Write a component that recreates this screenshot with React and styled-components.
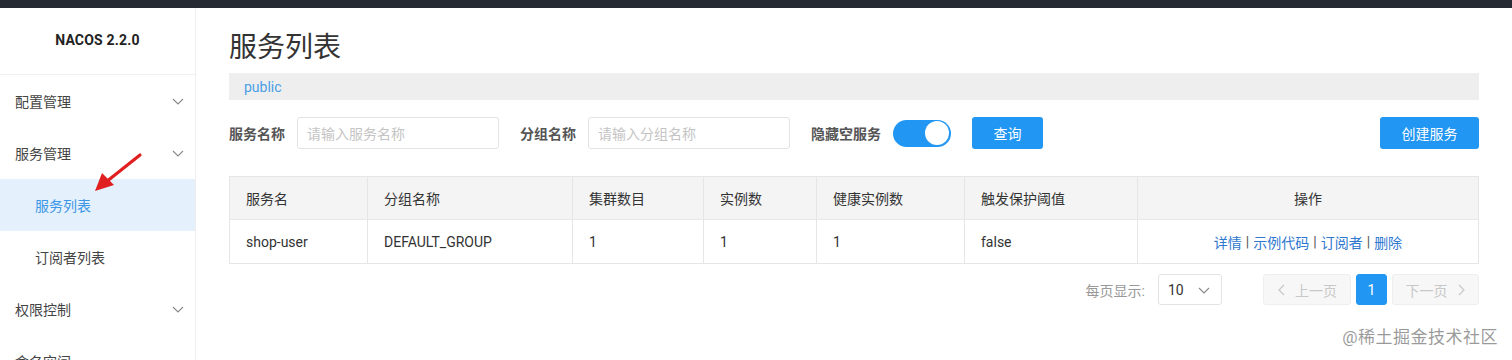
import React from "react";
import styled, { createGlobalStyle } from "styled-components";

const Global = createGlobalStyle`
  html, body { margin: 0; padding: 0; background: #fff; }
  body { font-family: Roboto, "Noto Sans CJK SC", sans-serif; color: #333; overflow: hidden; }
  * { box-sizing: border-box; }
`;

const Page = styled.div`
  position: relative;
  width: 1512px;
  height: 360px;
  overflow: hidden;
`;

const TopBar = styled.div`
  height: 8px;
  background: #262a33;
`;

const Body = styled.div`
  display: flex;
  height: 352px;
`;

const Sidebar = styled.aside`
  width: 196px;
  flex: none;
  border-right: 1px solid #eeeeee;
  display: flex;
  flex-direction: column;
  overflow: hidden;
`;

const Logo = styled.div`
  height: 67px;
  flex: none;
  border-bottom: 1px solid #f0f0f0;
  display: flex;
  align-items: center;
  justify-content: center;
  padding-bottom: 2px;
  font-weight: 700;
  font-size: 14px;
  color: #222;
  letter-spacing: 0.2px;
`;

const MenuItem = styled.div`
  height: 52px;
  flex: none;
  display: flex;
  align-items: center;
  justify-content: space-between;
  padding-left: ${(p) => (p.$sub ? "35px" : "15px")};
  padding-right: 10px;
  font-size: 14px;
  color: ${(p) => (p.$active ? "#3d96e6" : "#444")};
  background: ${(p) => (p.$active ? "#e4f1fc" : "transparent")};
`;

const Chevron = () => (
  <svg width="14" height="14" viewBox="0 0 14 14">
    <polyline points="2,5 7,10 12,5" fill="none" stroke="#888" strokeWidth="1.1" />
  </svg>
);

const Main = styled.main`
  flex: 1;
  padding: 20px 33px 0 33px;
  display: flex;
  flex-direction: column;
`;

const Title = styled.h1`
  margin: 0;
  font-size: 28px;
  line-height: 40px;
  font-weight: 400;
  color: #333;
`;

const NamespaceBar = styled.div`
  margin-top: 5px;
  height: 27px;
  background: #eeeeee;
  display: flex;
  align-items: center;
  padding-left: 15px;
  font-size: 14px;
  color: #4a9fe6;
`;

const FilterRow = styled.div`
  margin-top: 17px;
  height: 32px;
  display: flex;
  align-items: center;
`;

const Label = styled.span`
  font-size: 14px;
  font-weight: 700;
  color: #555;
  margin-right: ${(p) => p.$mr || 12}px;
`;

const Input = styled.div`
  width: 202px;
  height: 32px;
  border: 1px solid #e3e3e3;
  border-radius: 3px;
  display: flex;
  align-items: center;
  padding-left: 9px;
  font-size: 14px;
  color: #c4c4c4;
  margin-right: 21px;
`;

const Switch = styled.div`
  width: 58px;
  height: 27px;
  border-radius: 14px;
  background: #2196f3;
  display: flex;
  align-items: center;
  justify-content: flex-end;
  padding-right: 2px;
  margin-right: 21px;
`;

const Knob = styled.div`
  width: 24px;
  height: 24px;
  border-radius: 50%;
  background: #fff;
`;

const Button = styled.div`
  height: 32px;
  width: ${(p) => p.$w}px;
  border-radius: 3px;
  background: #2196f3;
  color: #fff;
  font-size: 14px;
  display: flex;
  align-items: center;
  justify-content: center;
`;

const Spacer = styled.div`
  flex: 1;
`;

const Table = styled.div`
  margin-top: 27px;
  border: 1px solid #e6e6e6;
  display: grid;
  grid-template-columns: 137px 205px 131px 113px 148px 173px 1fr;
`;

const Cell = styled.div`
  height: 43px;
  display: flex;
  align-items: center;
  justify-content: ${(p) => (p.$center ? "center" : "flex-start")};
  padding-left: ${(p) => (p.$center ? "0" : "16px")};
  font-size: 14px;
  color: #333;
  background: ${(p) => (p.$head ? "#f4f4f4" : "#fff")};
  border-left: ${(p) => (p.$first ? "none" : "1px solid #e6e6e6")};
  border-bottom: ${(p) => (p.$head ? "1px solid #e8e8e8" : "none")};
`;

const Link = styled.span`
  color: #2f78d0;
`;

const Sep = styled.span`
  color: #555;
  margin: 0 4px;
`;

const Pager = styled.div`
  margin-top: 10px;
  height: 31px;
  display: flex;
  align-items: center;
  justify-content: flex-end;
`;

const PagerLabel = styled.span`
  font-size: 14px;
  color: #999;
  margin-right: 13px;
`;

const Select = styled.div`
  width: 64px;
  height: 31px;
  border: 1px solid #e3e3e3;
  border-radius: 3px;
  display: flex;
  align-items: center;
  justify-content: space-between;
  padding: 0 10px 0 9px;
  font-size: 14px;
  color: #333;
  margin-right: 41px;
`;

const PageBtn = styled.div`
  height: 31px;
  width: ${(p) => p.$w}px;
  border-radius: 3px;
  border: 1px solid ${(p) => (p.$active ? "#2196f3" : "#eeeeee")};
  background: ${(p) => (p.$active ? "#2196f3" : "#f7f7f7")};
  color: ${(p) => (p.$active ? "#fff" : "#c8c8c8")};
  font-size: 14px;
  display: flex;
  align-items: center;
  justify-content: center;
  gap: 8px;
  margin-left: ${(p) => p.$ml || 0}px;
`;

const SmallArrow = ({ dir, color = "#c8c8c8" }) => (
  <svg width="10" height="12" viewBox="0 0 10 12">
    <polyline
      points={dir === "left" ? "7,1 2,6 7,11" : "3,1 8,6 3,11"}
      fill="none"
      stroke={color}
      strokeWidth="1.2"
    />
  </svg>
);

const Watermark = styled.div`
  position: absolute;
  right: 14px;
  bottom: 12px;
  font-size: 17px;
  color: rgba(120, 120, 120, 0.75);
  letter-spacing: 0.5px;
`;

const ArrowOverlay = styled.svg`
  position: absolute;
  left: 92px;
  top: 150px;
`;

const heads = ["服务名", "分组名称", "集群数目", "实例数", "健康实例数", "触发保护阈值"];
const row = ["shop-user", "DEFAULT_GROUP", "1", "1", "1", "false"];

export default function App() {
  return (
    <Page>
      <Global />
      <TopBar />
      <Body>
        <Sidebar>
          <Logo>NACOS 2.2.0</Logo>
          <MenuItem>配置管理<Chevron /></MenuItem>
          <MenuItem>服务管理<Chevron /></MenuItem>
          <MenuItem $sub $active>服务列表</MenuItem>
          <MenuItem $sub>订阅者列表</MenuItem>
          <MenuItem>权限控制<Chevron /></MenuItem>
          <MenuItem>命名空间</MenuItem>
        </Sidebar>
        <Main>
          <Title>服务列表</Title>
          <NamespaceBar>public</NamespaceBar>
          <FilterRow>
            <Label>服务名称</Label>
            <Input>请输入服务名称</Input>
            <Label>分组名称</Label>
            <Input>请输入分组名称</Input>
            <Label $mr={12}>隐藏空服务</Label>
            <Switch><Knob /></Switch>
            <Button $w={71}>查询</Button>
            <Spacer />
            <Button $w={99}>创建服务</Button>
          </FilterRow>
          <Table>
            {heads.map((h, i) => (
              <Cell key={h} $head $first={i === 0}>{h}</Cell>
            ))}
            <Cell $head $center>操作</Cell>
            {row.map((v, i) => (
              <Cell key={i} $first={i === 0}>{v}</Cell>
            ))}
            <Cell $center>
              <Link>详情</Link><Sep>|</Sep><Link>示例代码</Link><Sep>|</Sep>
              <Link>订阅者</Link><Sep>|</Sep><Link>删除</Link>
            </Cell>
          </Table>
          <Pager>
            <PagerLabel>每页显示:</PagerLabel>
            <Select>10<Chevron /></Select>
            <PageBtn $w={88}><SmallArrow dir="left" />上一页</PageBtn>
            <PageBtn $w={31} $active $ml={5}>1</PageBtn>
            <PageBtn $w={87} $ml={5}>下一页<SmallArrow dir="right" /></PageBtn>
          </Pager>
        </Main>
      </Body>
      <ArrowOverlay width="60" height="50" viewBox="0 0 60 50">
        <line x1="48" y1="5" x2="14" y2="32" stroke="#e02020" strokeWidth="3.2" strokeLinecap="round" />
        <polygon points="3,41 10,23 22,35" fill="#e02020" />
      </ArrowOverlay>
      <Watermark>@稀土掘金技术社区</Watermark>
    </Page>
  );
}
